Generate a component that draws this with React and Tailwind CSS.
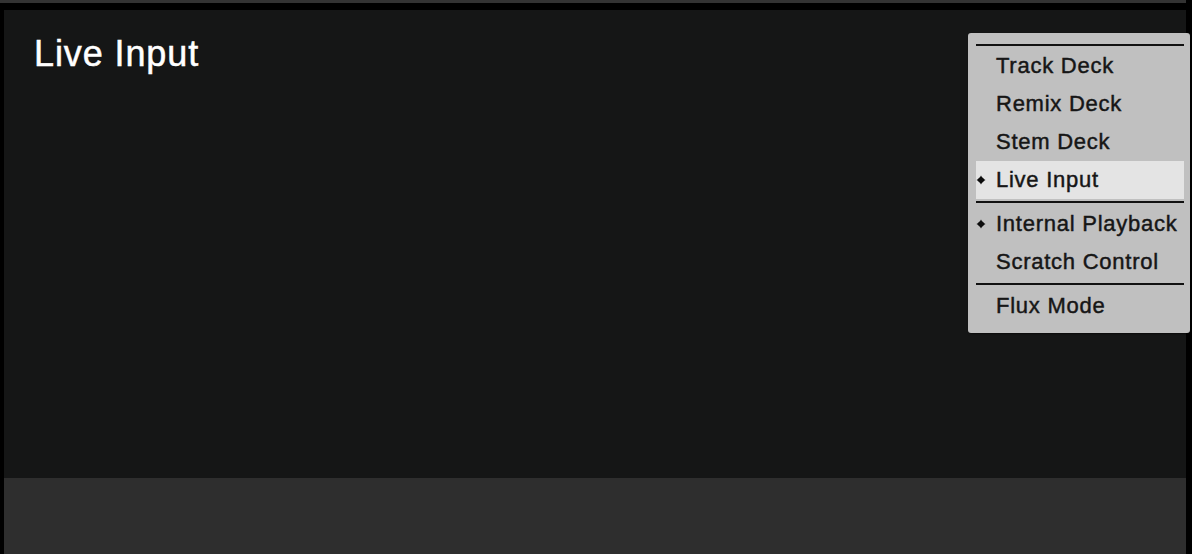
const items = [
  { label: "Track Deck" },
  { label: "Remix Deck" },
  { label: "Stem Deck" },
  { label: "Live Input", checked: true, active: true },
  { sep: true },
  { label: "Internal Playback", checked: true },
  { label: "Scratch Control" },
  { sep: true },
  { label: "Flux Mode" },
];

function Bullet() {
  return (
    <svg width="10" height="10" viewBox="0 0 10 10" className="shrink-0">
      <path d="M5 0.5 L6.6 3.2 L9.5 5 L6.6 6.8 L5 9.5 L3.4 6.8 L0.5 5 L3.4 3.2 Z" fill="#0d0d0d" />
      <circle cx="5" cy="5" r="2.8" fill="#0d0d0d" />
    </svg>
  );
}

function DeckMenu() {
  return (
    <div className="absolute left-[968px] top-[33px] w-[222px] rounded-[3px] bg-[#c0c0c0] pl-2 pr-1.5 pt-[11px] pb-[8px] shadow-[1px_1px_2px_rgba(0,0,0,0.5)]">
      <div className="h-[2px] bg-[#111] mb-[1px]" />
      {items.map((it, i) =>
        it.sep ? (
          <div key={i} className="h-[2px] bg-[#111] my-[2px]" />
        ) : (
          <div
            key={i}
            className={
              "flex items-center h-[38px] " + (it.active ? "bg-[#e4e4e4]" : "")
            }
          >
            <span className="w-[20px] flex items-center">
              {it.checked && <Bullet />}
            </span>
            <span className="text-[22px] leading-[42px] tracking-[0.75px] text-[#161616] [-webkit-text-stroke:0.45px_#161616]">
              {it.label}
            </span>
          </div>
        )
      )}
    </div>
  );
}

export default function App() {
  return (
    <div
      className="relative w-[1192px] h-[554px] bg-black flex flex-col overflow-hidden"
      style={{ fontFamily: '"Liberation Sans", Arial, sans-serif' }}
    >
      <div className="h-[3px] w-[1186px] bg-[#333333] shrink-0" />
      <div className="h-[7px] shrink-0" />
      <div className="flex-1 flex flex-col pl-[4px] pr-[6px]">
        <div className="flex-1 bg-[#151616] pl-[30px] pt-[26px]">
          <h1 className="text-[36px] leading-[36px] tracking-[0.9px] text-white [-webkit-text-stroke:0.5px_#ffffff]">
            Live Input
          </h1>
        </div>
        <div className="h-[76px] bg-[#2e2e2e] shrink-0" />
      </div>
      <DeckMenu />
    </div>
  );
}
